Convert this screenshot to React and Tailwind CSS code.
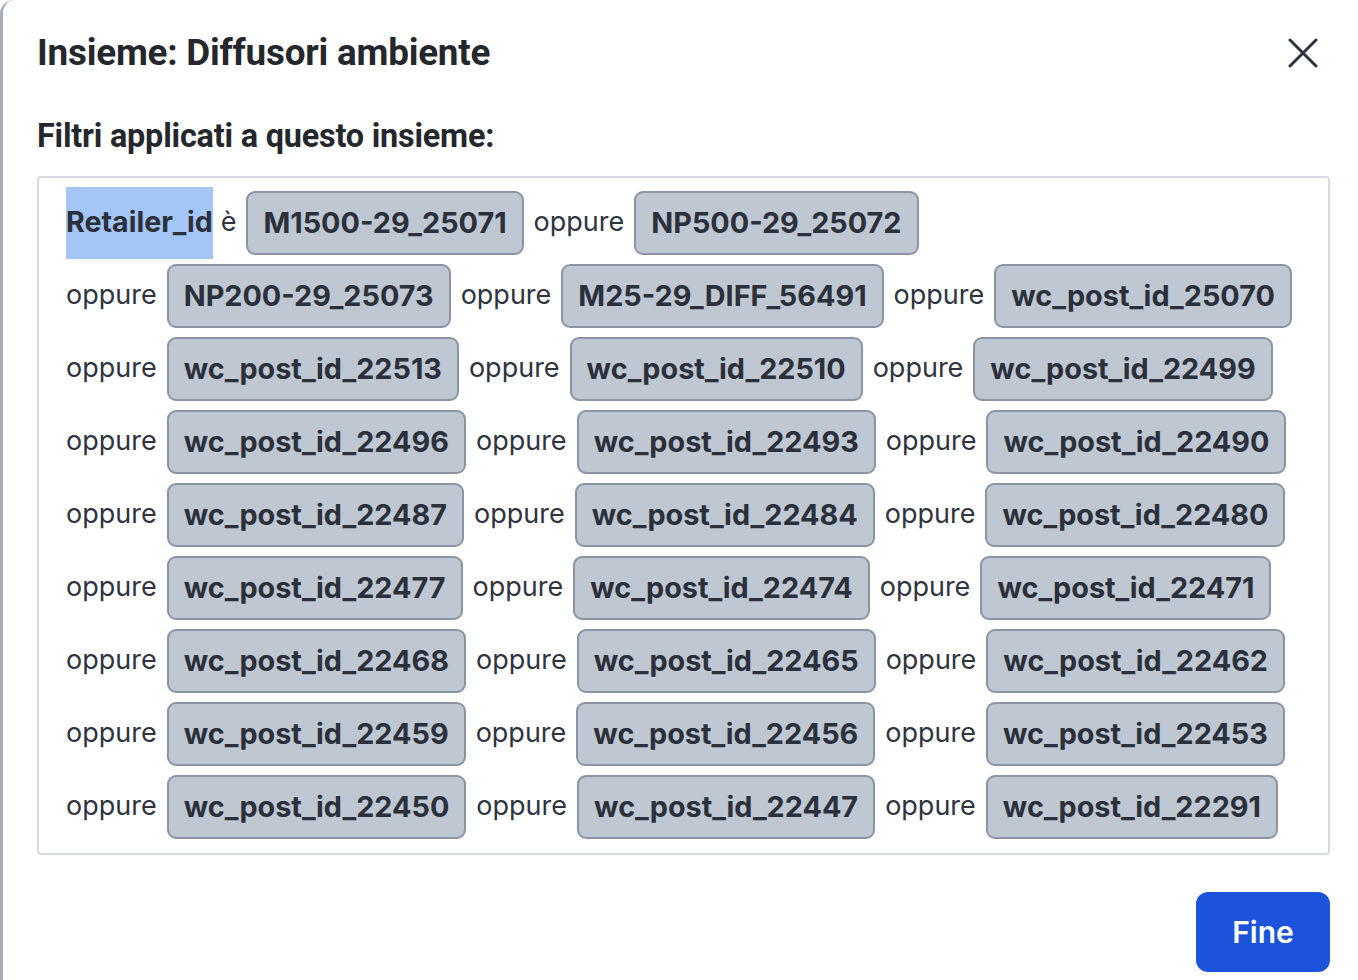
import React from "react"

const rows = [
    ["M1500-29_25071", "NP500-29_25072"],
    ["NP200-29_25073", "M25-29_DIFF_56491", "wc_post_id_25070"],
    ["wc_post_id_22513", "wc_post_id_22510", "wc_post_id_22499"],
    ["wc_post_id_22496", "wc_post_id_22493", "wc_post_id_22490"],
    ["wc_post_id_22487", "wc_post_id_22484", "wc_post_id_22480"],
    ["wc_post_id_22477", "wc_post_id_22474", "wc_post_id_22471"],
    ["wc_post_id_22468", "wc_post_id_22465", "wc_post_id_22462"],
    ["wc_post_id_22459", "wc_post_id_22456", "wc_post_id_22453"],
    ["wc_post_id_22450", "wc_post_id_22447", "wc_post_id_22291"],
]

function Chip({ label }) {
    return (
        <span className="inline-flex h-[64px] items-center rounded-[9px] border-2 border-[#8b94a2] bg-[#bfc7d3] px-[15px] text-[28.8px] font-bold text-[#2b303a]">
            {label}
        </span>
    )
}

function Or() {
    return <span className="text-[27px] text-[#2f3440]">oppure</span>
}

export default function App() {
    return (
        <div className="min-h-screen bg-white font-['Inter',sans-serif]">
            <div className="h-[980px] w-[1358px] rounded-tl-[14px] border-l-[3px] border-[#a8aeb8] bg-white pl-[34px] pr-[28px]">
                {/* Header */}
                <div className="flex items-center justify-between pt-[29px]">
                    <h2 className="font-['Roboto',sans-serif] text-[36.8px] font-bold leading-[48px] tracking-[-0.2px] text-[#24272c]">
                        Insieme: Diffusori ambiente
                    </h2>
                    <button className="mr-[11px] flex h-[40px] w-[32px] items-center justify-center text-[#2d3340]">
                        <svg width="30" height="30" viewBox="0 0 30 30" fill="none" stroke="currentColor" strokeWidth="3" strokeLinecap="round">
                            <path d="M2 2 L28 28 M28 2 L2 28" />
                        </svg>
                    </button>
                </div>

                <h3 className="mt-[39px] font-['Roboto',sans-serif] text-[32.4px] font-bold leading-[40px] tracking-[-0.2px] text-[#24272c]">
                    Filtri applicati a questo insieme:
                </h3>

                {/* Filters box */}
                <div className="mt-[20px] rounded-[4px] border-2 border-[#d7dbe0] pb-[10px] pl-[27px] pt-[8px]">
                    {rows.map((row, i) => (
                        <div key={i} className="flex h-[73px] items-center gap-[10px]">
                            {i === 0 ? (
                                <>
                                    <span className="flex h-[72px] items-center bg-[#a3c6f7] text-[28.6px] font-bold text-[#2b303a]">
                                        Retailer_id
                                    </span>
                                    <span className="-ml-[2px] text-[27px] text-[#2f3440]">è</span>
                                </>
                            ) : (
                                <Or />
                            )}
                            {row.map((c, j) => (
                                <React.Fragment key={c}>
                                    {j > 0 && <Or />}
                                    <Chip label={c} />
                                </React.Fragment>
                            ))}
                        </div>
                    ))}
                </div>

                <div className="mt-[37px] flex justify-end">
                    <button className="h-[80px] w-[134px] rounded-[12px] bg-[#1b54db] text-[30px] font-semibold text-white">
                        Fine
                    </button>
                </div>
            </div>
        </div>
    )
}
